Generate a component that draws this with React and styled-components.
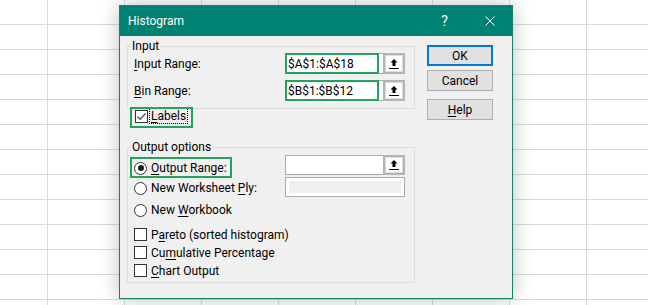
import React from "react";
import styled, { createGlobalStyle } from "styled-components";

const FONT = `Roboto, "Noto Sans", sans-serif`;

const GlobalStyle = createGlobalStyle`
  html, body { margin: 0; padding: 0; background: #fff; }
  body { font-family: ${FONT}; font-size: 12px; color: #000; }
  * { box-sizing: border-box; }
`;

const Sheet = styled.div`
  width: 648px;
  height: 305px;
  overflow: hidden;
  padding: 5px 0 0 119px;
  background-color: #fff;
  background-image:
    linear-gradient(to right, #dadada 1px, transparent 1px),
    linear-gradient(to bottom, #dadada 1px, transparent 1px);
  background-size: 77px 100%, 100% 25px;
  background-position: 47px 0, 0 24px;
`;

const Dialog = styled.div`
  width: 394px;
  height: 294px;
  border: 1px solid #17806f;
  background: #f0f0f0;
  box-shadow: 0 0 18px rgba(0, 0, 0, 0.25);
  display: flex;
  flex-direction: column;
`;

const TitleBar = styled.div`
  height: 30px;
  flex: none;
  background: #008272;
  color: #fff;
  display: flex;
  align-items: center;
  padding-left: 8px;
`;

const Title = styled.div`
  flex: 1;
  font-size: 12px;
  line-height: 16px;
`;

const TitleButton = styled.div`
  width: 45px;
  height: 30px;
  display: flex;
  align-items: center;
  justify-content: center;
  font-size: 14px;
  color: #fff;
`;

const Body = styled.div`
  flex: 1;
  display: flex;
  gap: 12px;
  padding: 3px 19px 0 7px;
`;

const LeftCol = styled.div`
  width: 288px;
  flex: none;
  display: flex;
  flex-direction: column;
  align-items: flex-start;
`;

const RightCol = styled.div`
  width: 66px;
  flex: none;
  display: flex;
  flex-direction: column;
  padding-top: 6px;
`;

const Group = styled.fieldset`
  margin: ${(p) => p.$top || 0}px 0 0;
  padding: 0 9px ${(p) => p.$pb}px 6px;
  border: 1px solid #dcdcdc;
  width: 288px;
  min-inline-size: 0;
`;

const Legend = styled.legend`
  padding: 0 1px;
  margin-left: -3px;
  font-size: 12px;
  line-height: 14px;
`;

const FieldRow = styled.div`
  display: flex;
  align-items: center;
  justify-content: space-between;
  height: 21px;
  & + & {
    margin-top: 6px;
  }
`;

const Label = styled.span`
  line-height: 14px;
  white-space: nowrap;
`;

const Key = styled.u`
  text-decoration-thickness: 1px;
  text-underline-offset: 2px;
`;

const RefField = styled.div`
  display: flex;
  flex: none;
  width: 120px;
  height: ${(p) => p.$h}px;
`;

const TextBox = styled.div`
  position: relative;
  width: 98px;
  flex: none;
  background: #fff;
  border: 1px solid #ababab;
  border-right: none;
  padding-left: 2px;
  display: flex;
  align-items: center;
  line-height: 14px;
  white-space: nowrap;
  ${(p) =>
    p.$mark &&
    `&::after {
      content: "";
      position: absolute;
      left: -1px;
      top: -1px;
      bottom: -1px;
      width: 90px;
      border: 2px solid #22a45e;
    }`}
`;

const DisabledBox = styled.div`
  width: 120px;
  height: 20px;
  border: 1px solid #ababab;
  background: #efefef;
  box-shadow: inset 0 0 0 3px #fff;
`;

const RefButton = styled.div`
  width: 22px;
  flex: none;
  border: 2px solid #b4b4b4;
  background: #fff;
  box-shadow: inset 0 0 0 1px #dcdcdc;
  display: flex;
  align-items: center;
  justify-content: center;
`;

const Option = styled.div`
  position: relative;
  display: inline-flex;
  align-items: center;
  gap: ${(p) => (p.$gap != null ? p.$gap : 4)}px;
  height: ${(p) => p.$h || 18}px;
  margin-top: ${(p) => p.$mt || 0}px;
  margin-left: ${(p) => p.$ml || 0}px;
  white-space: nowrap;
  line-height: 14px;
  ${(p) =>
    p.$mark &&
    `&::after {
      content: "";
      position: absolute;
      inset: ${p.$mark};
      border: 2px solid #22a45e;
      pointer-events: none;
    }`}
`;

const CheckBox = styled.span`
  width: 13px;
  height: 13px;
  flex: none;
  border: 1px solid #333;
  background: #fff;
  display: inline-flex;
  align-items: center;
  justify-content: center;
`;

const RadioBox = styled(CheckBox)`
  border-radius: 50%;
`;

const RadioDot = styled.span`
  width: 6px;
  height: 6px;
  border-radius: 50%;
  background: #1a1a1a;
`;

const FocusText = styled.span`
  outline: 1px dotted #000;
  outline-offset: 0;
  padding: 0 1px;
  line-height: 14px;
`;

const OutputGrid = styled.div`
  display: grid;
  grid-template-columns: minmax(0, 1fr) 120px;
`;

const OptionList = styled.div`
  display: flex;
  flex-direction: column;
  align-items: flex-start;
`;

const FieldList = styled.div`
  display: flex;
  flex-direction: column;
  gap: 2px;
  padding-top: 1px;
`;

const Button = styled.button`
  width: 66px;
  height: 21px;
  margin: ${(p) => p.$mt || 0}px 0 0;
  padding: 0;
  font: 12px ${FONT};
  color: #000;
  background: #e1e1e1;
  border: ${(p) => (p.$default ? "2px solid #0078d7" : "1px solid #adadad")};
`;

const UpArrow = () => (
  <svg width="10" height="10" viewBox="0 0 10 10">
    <path d="M5 0 L8.5 3.5 H6.5 V7 H3.5 V3.5 H1.5 Z" fill="#000" />
    <rect x="0" y="9" width="10" height="1" fill="#000" />
  </svg>
);

const CloseIcon = () => (
  <svg width="10" height="10" viewBox="0 0 10 10">
    <path d="M0.5 0.5 L9.5 9.5 M9.5 0.5 L0.5 9.5" stroke="#fff" strokeWidth="1" />
  </svg>
);

const Tick = () => (
  <svg width="11" height="11" viewBox="0 0 11 11">
    <path d="M1.5 5.5 L4.2 8.2 L9.5 2.5" stroke="#555" strokeWidth="1.3" fill="none" />
  </svg>
);

export default function App() {
  return (
    <>
      <GlobalStyle />
      <Sheet>
        <Dialog>
          <TitleBar>
            <Title>Histogram</Title>
            <TitleButton>?</TitleButton>
            <TitleButton>
              <CloseIcon />
            </TitleButton>
          </TitleBar>
          <Body>
            <LeftCol>
              <Group $pb={7}>
                <Legend>Input</Legend>
                <FieldRow>
                  <Label>
                    <Key>I</Key>nput Range:
                  </Label>
                  <RefField $h={21}>
                    <TextBox $mark>$A$1:$A$18</TextBox>
                    <RefButton>
                      <UpArrow />
                    </RefButton>
                  </RefField>
                </FieldRow>
                <FieldRow>
                  <Label>
                    <Key>B</Key>in Range:
                  </Label>
                  <RefField $h={21}>
                    <TextBox $mark>$B$1:$B$12</TextBox>
                    <RefButton>
                      <UpArrow />
                    </RefButton>
                  </RefField>
                </FieldRow>
              </Group>

              <Option $h={14} $ml={8} $gap={2} $mark="-2px -6px -5px -5px">
                <CheckBox>
                  <Tick />
                </CheckBox>
                <FocusText>
                  <Key>L</Key>abels
                </FocusText>
              </Option>

              <Group $top={17} $pb={3}>
                <Legend>Output options</Legend>
                <OutputGrid>
                  <OptionList>
                    <Option $mt={5} $mark="-2px -5px -1px -4px">
                      <RadioBox>
                        <RadioDot />
                      </RadioBox>
                      <span>
                        <Key>O</Key>utput Range:
                      </span>
                    </Option>
                    <Option $mt={2}>
                      <RadioBox />
                      <span>
                        New Worksheet <Key>P</Key>ly:
                      </span>
                    </Option>
                    <Option $mt={4}>
                      <RadioBox />
                      <span>
                        New <Key>W</Key>orkbook
                      </span>
                    </Option>
                    <Option $mt={7} $h={17}>
                      <CheckBox />
                      <span>
                        P<Key>a</Key>reto (sorted histogram)
                      </span>
                    </Option>
                    <Option $mt={1} $h={17}>
                      <CheckBox />
                      <span>
                        Cu<Key>m</Key>ulative Percentage
                      </span>
                    </Option>
                    <Option $mt={1} $h={17}>
                      <CheckBox />
                      <span>
                        <Key>C</Key>hart Output
                      </span>
                    </Option>
                  </OptionList>
                  <FieldList>
                    <RefField $h={20}>
                      <TextBox />
                      <RefButton>
                        <UpArrow />
                      </RefButton>
                    </RefField>
                    <DisabledBox />
                  </FieldList>
                </OutputGrid>
              </Group>
            </LeftCol>

            <RightCol>
              <Button $default>OK</Button>
              <Button $mt={4}>Cancel</Button>
              <Button $mt={8}>
                <Key>H</Key>elp
              </Button>
            </RightCol>
          </Body>
        </Dialog>
      </Sheet>
    </>
  );
}
